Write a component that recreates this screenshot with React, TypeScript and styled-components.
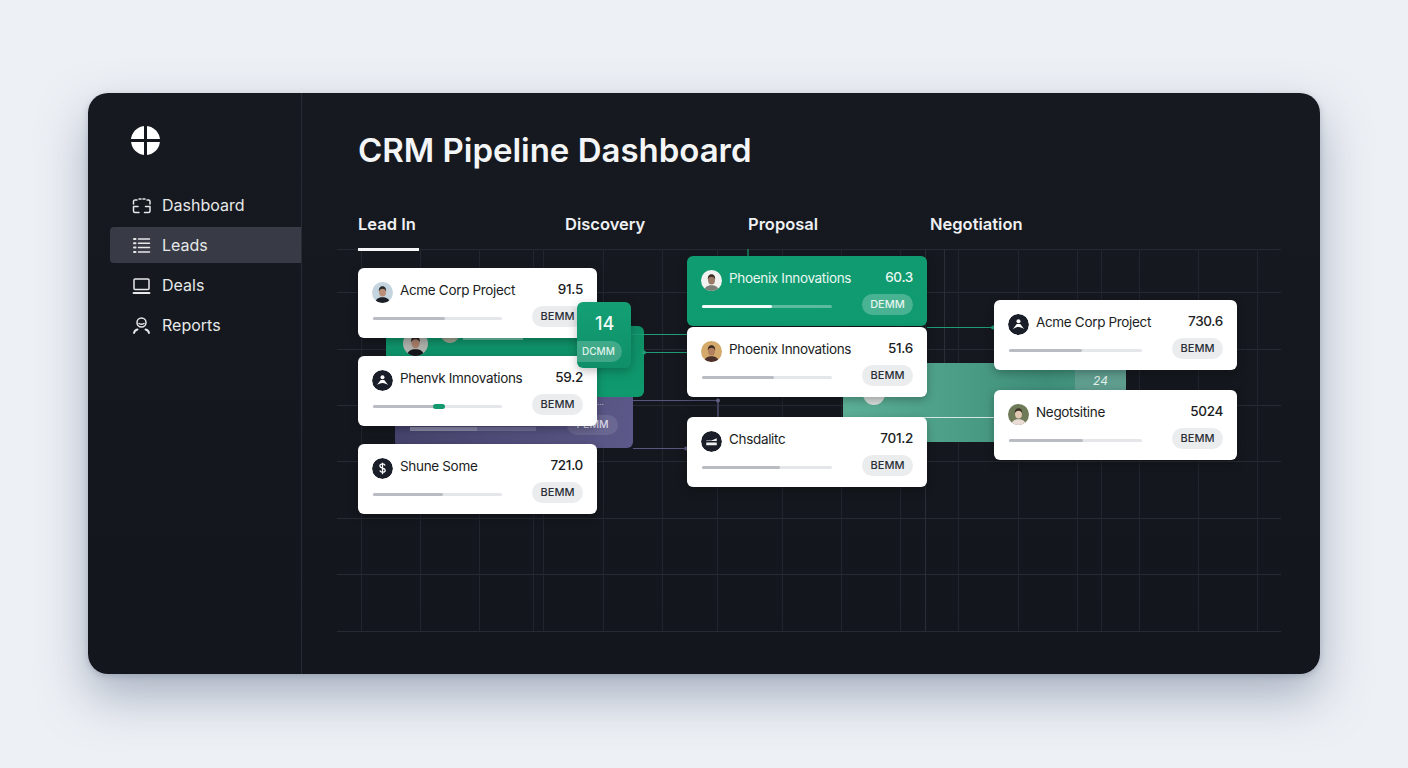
import React from 'react';
import styled, { createGlobalStyle } from 'styled-components';

const GRID_H = [249, 292, 349, 405, 461, 518, 574, 631];
const GRID_V = [361, 420, 479, 533, 543, 603, 662, 717, 782, 841, 900, 958, 1018, 1077, 1101, 1139, 1198, 1257];

type AvatarKind = 'blue' | 'mark' | 'dollar' | 'white' | 'tan' | 'bars' | 'olive' | 'gray' | 'moss';

type Deal = {
  name: string;
  value: string;
  avatar: AvatarKind;
  progress: number;
  accent?: boolean;
};

const LEAD_IN: Deal[] = [
  { name: 'Acme Corp Project', value: '91.5', avatar: 'blue', progress: 56 },
  { name: 'Phenvk Imnovations', value: '59.2', avatar: 'mark', progress: 48, accent: true },
  { name: 'Shune Some', value: '721.0', avatar: 'dollar', progress: 54 },
];
const DISCOVERY: Deal[] = [
  { name: 'Phoenix Innovations', value: '51.6', avatar: 'tan', progress: 55 },
  { name: 'Chsdalitc', value: '701.2', avatar: 'bars', progress: 60 },
];
const PROPOSAL: Deal[] = [
  { name: 'Acme Corp Project', value: '730.6', avatar: 'mark', progress: 55 },
  { name: 'Negotsitine', value: '5024', avatar: 'olive', progress: 56 },
];

const GlobalStyle = createGlobalStyle`
  html, body {
    margin: 0;
    padding: 0;
    background: #eceff4;
  }
  body {
    font-family: Inter, "Liberation Sans", sans-serif;
  }
`;

const Page = styled.div`
  width: 1408px;
  height: 768px;
  padding-top: 93px;
  box-sizing: border-box;
  overflow: hidden;
  display: flex;
  justify-content: center;
  align-items: flex-start;
  background: #edf0f5;
`;

const Panel = styled.div`
  width: 1232px;
  height: 581px;
  border-radius: 20px;
  background: linear-gradient(180deg, #161a20, #13171d);
  display: flex;
  overflow: hidden;
  box-shadow: 0 22px 48px rgba(100, 115, 142, 0.5), 0 2px 6px rgba(90, 100, 120, 0.3);
`;

const Sidebar = styled.aside`
  width: 213px;
  flex: none;
  border-right: 1px solid #272b33;
  padding-top: 33px;
`;

const Logo = styled.svg`
  display: block;
  width: 29px;
  height: 29px;
  margin-left: 43px;
`;

const Nav = styled.nav`
  margin: 32px 0 0 22px;
  display: flex;
  flex-direction: column;
  gap: 4px;
`;

const NavItem = styled.div<{ $active?: boolean }>`
  height: 36px;
  padding-left: 22px;
  display: flex;
  align-items: center;
  gap: 11px;
  font-size: 16px;
  color: #e6e8ea;
  border-radius: 4px 0 0 4px;
  background: ${(p) => (p.$active ? '#383b45' : 'transparent')};
`;

const NavIcon = styled.svg`
  width: 19px;
  height: 19px;
  flex: none;
  fill: none;
  stroke: #e6e8ea;
  stroke-width: 1.5;
  stroke-linecap: round;
  stroke-linejoin: round;
`;

const Main = styled.main`
  flex: 1;
  min-width: 0;
  padding-left: 35px;
`;

const Title = styled.h1`
  margin: 36px 0 0 21px;
  font-size: 33px;
  line-height: 42px;
  font-weight: 600;
  letter-spacing: -0.02px;
  color: #f4f5f6;
`;

const Tabs = styled.div`
  position: relative;
  z-index: 3;
  margin: 41px 0 0 21px;
  height: 39px;
  display: grid;
  grid-template-columns: 207px 183px 182px auto;
  justify-content: start;
`;

const Tab = styled.div<{ $active?: boolean }>`
  width: ${(p) => (p.$active ? '61px' : 'auto')};
  height: 36px;
  line-height: 24px;
  font-size: 16.5px;
  font-weight: 600;
  color: #eff0f2;
  border-bottom: 3px solid ${(p) => (p.$active ? '#f5f6f7' : 'transparent')};
`;

const Board = styled.div`
  position: relative;
  width: 944px;
  height: 383px;
  margin-top: -2px;
`;

const BoardSvg = styled.svg<{ $layer: number }>`
  position: absolute;
  inset: 0;
  width: 944px;
  height: 383px;
  z-index: ${(p) => p.$layer};
`;

const Lanes = styled.div`
  position: relative;
  z-index: 2;
  display: flex;
  align-items: flex-start;
  padding-left: 21px;
`;

const Lane = styled.div<{ $width: number; $left: number; $top: number; $gap: number }>`
  width: ${(p) => p.$width}px;
  flex: none;
  margin-left: ${(p) => p.$left}px;
  padding-top: ${(p) => p.$top}px;
  display: flex;
  flex-direction: column;
  gap: ${(p) => p.$gap}px;
`;

const CardGroup = styled.div`
  display: flex;
  flex-direction: column;
  gap: 1px;
`;

const Card = styled.div<{ $green?: boolean }>`
  height: 70px;
  box-sizing: border-box;
  padding: 12px 14px 0;
  border-radius: 6px;
  background: ${(p) => (p.$green ? 'linear-gradient(135deg, #0f9c70, #119a70)' : '#ffffff')};
  color: ${(p) => (p.$green ? '#e9f7f1' : '#1b1d23')};
  box-shadow: 0 3px 10px rgba(0, 0, 0, 0.28);
`;

const CardTop = styled.div`
  display: flex;
  align-items: flex-start;
  height: 26px;
`;

const Name = styled.div`
  margin-left: 7px;
  font-size: 13.5px;
  line-height: 20px;
  letter-spacing: -0.33px;
  white-space: nowrap;
  flex: 1;
`;

const Value = styled.div`
  font-size: 13.5px;
  line-height: 18px;
  font-weight: 500;
  letter-spacing: -0.3px;
  white-space: nowrap;
`;

const CardBottom = styled.div`
  display: flex;
  align-items: center;
`;

const Track = styled.div<{ $green?: boolean }>`
  position: relative;
  flex: 1;
  height: 3px;
  margin: 4px 30px 0 1px;
  border-radius: 2px;
  background: ${(p) => (p.$green ? 'rgba(255, 255, 255, 0.32)' : '#e5e6e9')};
`;

const Fill = styled.div<{ $green?: boolean }>`
  height: 100%;
  border-radius: 2px;
  background: ${(p) => (p.$green ? '#f4fbf8' : '#b9bcc2')};
`;

const AccentDot = styled.div`
  position: absolute;
  left: 60px;
  top: -1px;
  width: 12px;
  height: 5px;
  border-radius: 3px;
  background: #12996f;
`;

const Pill = styled.div<{ $green?: boolean }>`
  width: 51px;
  flex: none;
  height: 21px;
  line-height: 21px;
  border-radius: 11px;
  text-align: center;
  font-size: 11px;
  font-weight: 500;
  color: ${(p) => (p.$green ? '#e4f5ee' : '#2c2f36')};
  background: ${(p) => (p.$green ? 'rgba(255, 255, 255, 0.24)' : '#ebecee')};
`;

const AvatarSvg = styled.svg`
  display: block;
  width: 21px;
  height: 21px;
  flex: none;
  border-radius: 50%;
  margin-top: 2px;
`;

/* blocks half hidden behind the cards */
const GreenBlock = styled.div`
  position: absolute;
  z-index: 1;
  left: 49px;
  top: 77px;
  width: 258px;
  height: 71px;
  border-radius: 6px;
  background: linear-gradient(180deg, #0f8f66, #0f9a6e);
  overflow: hidden;
`;

const GhostAvatar = styled.div<{ $left: number; $top: number; $size: number }>`
  position: absolute;
  left: ${(p) => p.$left}px;
  top: ${(p) => p.$top}px;
  width: ${(p) => p.$size}px;
  height: ${(p) => p.$size}px;

  & > svg {
    width: 100%;
    height: 100%;
    margin: 0;
  }
`;

const GhostStrip = styled.div`
  position: absolute;
  left: 77px;
  top: 12px;
  width: 60px;
  height: 2px;
  background: rgba(220, 240, 232, 0.45);
`;

const PurpleBlock = styled.div`
  position: absolute;
  z-index: 1;
  left: 58px;
  top: 148px;
  width: 238px;
  height: 51px;
  border-radius: 0 0 6px 6px;
  background: linear-gradient(100deg, #45436c, #5c5889);
  overflow: hidden;
`;

const PurpleBar = styled.div`
  position: absolute;
  left: 15px;
  top: 30px;
  width: 126px;
  height: 4px;
  background: linear-gradient(90deg, #8a88a6 53%, #6f6c96 53%);
`;

const PurplePill = styled.div`
  position: absolute;
  left: 172px;
  top: 18px;
  width: 51px;
  height: 20px;
  line-height: 20px;
  border-radius: 10px;
  text-align: center;
  font-size: 10.5px;
  font-weight: 500;
  color: #d9d8e8;
  background: rgba(255, 255, 255, 0.1);
`;

const PurpleNote = styled.div`
  position: absolute;
  left: 202px;
  top: 1px;
  font-size: 8px;
  line-height: 8px;
  color: #c9c7de;
`;

const TealBlock = styled.div`
  position: absolute;
  z-index: 1;
  left: 506px;
  top: 114px;
  width: 283px;
  height: 79px;
  border-radius: 2px;
  background: linear-gradient(90deg, #5cb096, #3f8f7a 72%, #4a9a84);
  overflow: hidden;
`;

const TealTile = styled.div`
  position: absolute;
  right: 0;
  top: 0;
  width: 51px;
  height: 27px;
  line-height: 36px;
  text-align: center;
  font-size: 12px;
  font-style: italic;
  color: #e4f2ee;
  background: #5f9e8f;
`;

const TealBadge = styled.div`
  position: absolute;
  left: 20px;
  top: 20px;
  width: 22px;
  height: 22px;
  border-radius: 50%;
  background: #d8dedb;
`;

const CountTile = styled.div`
  position: absolute;
  z-index: 3;
  left: 240px;
  top: 53px;
  width: 54px;
  height: 66px;
  border-radius: 6px;
  overflow: hidden;
  background: linear-gradient(180deg, #14a074, #0f8f67);
  box-shadow: 0 3px 10px rgba(0, 0, 0, 0.25);
`;

const Count = styled.div`
  margin-top: 11px;
  padding-left: 18px;
  font-size: 18px;
  line-height: 22px;
  font-weight: 500;
  color: #f1faf6;
`;

const CountPill = styled.div`
  margin: 6px 0 0 -8px;
  width: 53px;
  height: 21px;
  line-height: 21px;
  padding-left: 13px;
  box-sizing: border-box;
  border-radius: 11px;
  font-size: 10px;
  font-weight: 500;
  color: #dff3ea;
  background: rgba(255, 255, 255, 0.2);
`;

const Avatar = ({ kind }: { kind: AvatarKind }) => {
  if (kind === 'mark') {
    return (
      <AvatarSvg viewBox="0 0 20 20">
        <circle cx="10" cy="10" r="10" fill="#1a1e28" />
        <circle cx="10" cy="6.800" r="1.900" fill="#fff" />
        <path d="M4.500 14.500L8.300 9.500h3.400l3.800 5c-1.600-1.300-3.600-2.200-5.500-2.200s-3.900.9-5.500 2.200z" fill="#fff" />
      </AvatarSvg>
    );
  }
  if (kind === 'dollar') {
    return (
      <AvatarSvg viewBox="0 0 20 20">
        <circle cx="10" cy="10" r="10" fill="#1a1e28" />
        <path d="M12.500 7.200c-.4-1-1.400-1.500-2.500-1.500-1.400 0-2.500.7-2.500 1.900 0 2.700 5.100 1.300 5.100 4 0 1.200-1.200 2-2.600 2-1.200 0-2.200-.6-2.600-1.600M10 4.500v11" fill="none" stroke="#fff" strokeWidth="1.200" />
      </AvatarSvg>
    );
  }
  if (kind === 'bars') {
    return (
      <AvatarSvg viewBox="0 0 20 20">
        <circle cx="10" cy="10" r="10" fill="#1a1e28" />
        <path d="M5 9h5l5-2v2.500H5zM5 11h10v2.500H5z" fill="#eef0f2" />
      </AvatarSvg>
    );
  }
  const palette = {
    blue: { bg: '#c5d5df', hair: '#2a2a2c', skin: '#b98f78', body: '#1c1f26' },
    white: { bg: '#f2f3f1', hair: '#3a2a24', skin: '#9a7a66', body: '#7c7f78' },
    tan: { bg: '#d3aa6c', hair: '#3b2a22', skin: '#b27f5e', body: '#4a2f2a' },
    olive: { bg: '#6f7a58', hair: '#3c3226', skin: '#e3c8b4', body: '#eadcd4' },
    gray: { bg: '#b0b2ad', hair: '#2a2424', skin: '#a87f6a', body: '#15171c' },
    moss: { bg: '#8f9a88', hair: '#5b5a4e', skin: '#b59a80', body: '#9aa08e' },
  }[kind];
  return (
    <AvatarSvg viewBox="0 0 20 20">
      <rect width="20" height="20" fill={palette.bg} />
      <path d="M3 20c.5-4 3.500-5.500 7-5.500s6.500 1.500 7 5.500z" fill={palette.body} />
      <ellipse cx="10" cy="9.500" rx="3.300" ry="4.300" fill={palette.skin} />
      <path d="M6.500 9c-.3-3.500 1.500-5 3.500-5s3.800 1.500 3.500 5c-.8-1.800-2-2.500-3.500-2.500S7.300 7.200 6.500 9z" fill={palette.hair} />
    </AvatarSvg>
  );
};

const DealCard = ({ deal, green }: { deal: Deal; green?: boolean }) => (
  <Card $green={green}>
    <CardTop>
      <Avatar kind={deal.avatar} />
      <Name>{deal.name}</Name>
      <Value>{deal.value}</Value>
    </CardTop>
    <CardBottom>
      <Track $green={green}>
        <Fill $green={green} style={{ width: `${deal.progress}%` }} />
        {deal.accent && <AccentDot />}
      </Track>
      <Pill $green={green}>{green ? 'DEMM' : 'BEMM'}</Pill>
    </CardBottom>
  </Card>
);

const App = () => (
  <Page>
    <GlobalStyle />
    <Panel>
      <Sidebar>
        <Logo viewBox="0 0 29 29">
          <circle cx="14.500" cy="14.500" r="14.500" fill="#ffffff" />
          <path d="M14.500 0v29M0 14.500h29" stroke="#14181e" strokeWidth="3" />
        </Logo>
        <Nav>
          <NavItem>
            <NavIcon viewBox="0 0 19 19">
              <path d="M1.500 8V5.500a1.500 1.500 0 0 1 1.500-1.500h2M7 3h2M11 3h2M15 4h1.500A1.500 1.500 0 0 1 18 5.500V8" />
              <path d="M1.500 10.500H6M1.500 10.500v4.500A1.500 1.500 0 0 0 3 16.500h4M18 10.500h-4.500M18 10.500v4.500a1.500 1.500 0 0 1-1.500 1.500h-4" />
            </NavIcon>
            Dashboard
          </NavItem>
          <NavItem $active>
            <NavIcon viewBox="0 0 19 19">
              <path d="M6.500 3h11M6.500 7.300h11M6.500 11.600h11M6.500 16h11" />
              <path d="M2 3h1.500M2 7.300h1.500M2 11.600h1.500M2 16h1.500" strokeWidth="2" />
            </NavIcon>
            Leads
          </NavItem>
          <NavItem>
            <NavIcon viewBox="0 0 19 19">
              <rect x="2" y="3" width="15" height="10.500" rx="1" />
              <path d="M1.500 17h16" strokeWidth="1.800" />
            </NavIcon>
            Deals
          </NavItem>
          <NavItem>
            <NavIcon viewBox="0 0 19 19">
              <circle cx="9.500" cy="6.500" r="4.500" />
              <path d="M7 7.500c1.500 1 3.500 1 5 0" />
              <path d="M2 17c.3-1.800 1.500-3 3.500-3.500M17 17c-.3-1.800-1.500-3-3.500-3.500" strokeWidth="1.900" />
            </NavIcon>
            Reports
          </NavItem>
        </Nav>
      </Sidebar>
      <Main>
        <Title>CRM Pipeline Dashboard</Title>
        <Tabs>
          <Tab $active>Lead In</Tab>
          <Tab>Discovery</Tab>
          <Tab>Proposal</Tab>
          <Tab>Negotiation</Tab>
        </Tabs>
        <Board>
          <BoardSvg $layer={0} viewBox="337 249 944 383">
            {GRID_H.map((y) => (
              <line key={y} x1="337" x2="1281" y1={y + 0.5} y2={y + 0.5} stroke="#262a33" />
            ))}
            {GRID_V.map((x) => (
              <line key={x} x1={x + 0.5} x2={x + 0.5} y1="249" y2="631" stroke="#21252e" />
            ))}
            <line x1="925.500" x2="925.500" y1="249" y2="631" stroke="#2a2e37" />
            <line x1="944.500" x2="944.500" y1="249" y2="363" stroke="#2a2e37" />
          </BoardSvg>
          <GreenBlock>
            <GhostAvatar $left={17} $top={5} $size={25}>
              <Avatar kind="gray" />
            </GhostAvatar>
            <GhostAvatar $left={54} $top={-3} $size={20}>
              <Avatar kind="moss" />
            </GhostAvatar>
            <GhostStrip />
          </GreenBlock>
          <PurpleBlock>
            <PurpleNote>…</PurpleNote>
            <PurpleBar />
            <PurplePill>PEMM</PurplePill>
          </PurpleBlock>
          <TealBlock>
            <TealBadge />
            <TealTile>24</TealTile>
          </TealBlock>
          <BoardSvg $layer={1} viewBox="337 249 944 383">
            <path d="M631 334.500H687M644 352.500H687M927 327.500H994M748 249V256" stroke="#1f9c75" strokeWidth="1.200" fill="none" />
            <path d="M633 400.500H718V417M633 448.500H687" stroke="#59577f" strokeWidth="1.200" fill="none" />
            <path d="M865 417.500H994" stroke="#d4e8e1" strokeWidth="1.200" fill="none" />
            <circle cx="644" cy="352.500" r="2" fill="#1f9c75" />
            <circle cx="718" cy="400.500" r="2" fill="#6f6d96" />
            <circle cx="686" cy="448.500" r="2" fill="#59577f" />
            <circle cx="993" cy="327.500" r="2" fill="#1f9c75" />
          </BoardSvg>
          <Lanes>
            <Lane $width={239} $left={0} $top={19} $gap={18}>
              {LEAD_IN.map((deal) => (
                <DealCard key={deal.name} deal={deal} />
              ))}
            </Lane>
            <Lane $width={240} $left={90} $top={7} $gap={20}>
              <CardGroup>
                <DealCard
                  green
                  deal={{ name: 'Phoenix Innovations', value: '60.3', avatar: 'white', progress: 54 }}
                />
                <DealCard deal={DISCOVERY[0]} />
              </CardGroup>
              <DealCard deal={DISCOVERY[1]} />
            </Lane>
            <Lane $width={243} $left={67} $top={51} $gap={20}>
              {PROPOSAL.map((deal) => (
                <DealCard key={deal.name} deal={deal} />
              ))}
            </Lane>
          </Lanes>
          <CountTile>
            <Count>14</Count>
            <CountPill>DCMM</CountPill>
          </CountTile>
        </Board>
      </Main>
    </Panel>
  </Page>
);

export default App;
